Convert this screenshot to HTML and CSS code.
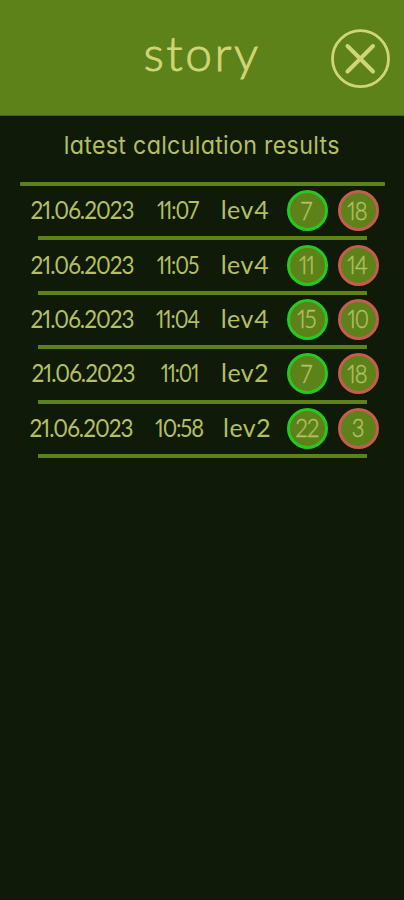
FILE: index.html
```html
<!DOCTYPE html>
<html lang="en">
<head>
<meta charset="utf-8">
<title>story</title>
<link rel="stylesheet" href="styles.css">
</head>
<body>
<main class="screen">
  <header class="bar">
    <h1 class="title"><span>story</span></h1>
    <button class="close" aria-label="Close">
      <svg viewBox="0 0 60 60"><circle cx="29.5" cy="29.7" r="28"/><path d="M16.5 17 42 42.5M42 17 16.5 42.5"/></svg>
    </button>
  </header>
  <h2 class="subtitle"><span>latest calculation results</span></h2>
  <section class="results">
    <div class="row"><span class="date">21.06.2023</span><span class="time">11:07</span><span class="level">lev4</span><span class="badge right"><b>7</b></span><span class="badge wrong"><b>18</b></span></div>
    <div class="row"><span class="date">21.06.2023</span><span class="time">11:05</span><span class="level">lev4</span><span class="badge right"><b>11</b></span><span class="badge wrong"><b>14</b></span></div>
    <div class="row"><span class="date">21.06.2023</span><span class="time">11:04</span><span class="level">lev4</span><span class="badge right"><b>15</b></span><span class="badge wrong"><b>10</b></span></div>
    <div class="row narrow"><span class="date">21.06.2023</span><span class="time">11:01</span><span class="level">lev2</span><span class="badge right"><b>7</b></span><span class="badge wrong"><b>18</b></span></div>
    <div class="row wide"><span class="date">21.06.2023</span><span class="time">10:58</span><span class="level">lev2</span><span class="badge right"><b>22</b></span><span class="badge wrong"><b>3</b></span></div>
  </section>
</main>
</body>
</html>
```
FILE: styles.css
```css
* { box-sizing: border-box; }
body { margin: 0; background: #0f1a08; }
.screen {
  height: 900px;
  overflow: hidden;
  background: #0f1a08;
  color: #b4bf62;
  font-family: Lato, sans-serif;
  border-bottom: 1px solid #1c1009;
}
.bar {
  display: grid;
  grid-template-columns: 1fr 60px;
  height: 116px;
  padding: 29px 13px 0 73px;
  background: #5d8219;
  border-bottom: 1px solid #456313;
  color: #d0d577;
}
.title {
  margin: 0;
  font-size: 48px;
  font-weight: 300;
  line-height: 48px;
  text-align: center;
  letter-spacing: 2.5px;
  -webkit-text-stroke: 0.9px;
}
.close { width: 60px; height: 60px; padding: 0; border: 0; background: none; }
.close svg { display: block; fill: none; stroke: #d0d577; stroke-width: 2.8; stroke-linecap: round; }
.close path { stroke-width: 4; }
.subtitle {
  height: 66px;
  margin: 0;
  font: 400 24.5px/59px Inter, sans-serif;
  font-feature-settings: "cv11";
  text-align: center;
  white-space: nowrap;
}
.subtitle span { display: inline-block; letter-spacing: 0.3px; transform: translateX(-0.5px) scaleX(0.95); }
.results::before {
  content: "";
  display: block;
  height: 4px;
  margin: 0 19px 0 20px;
  background: #5d8219;
  border-radius: 1px;
}
.row {
  display: grid;
  grid-template-columns: 104px 52px 50px 41px 41px;
  column-gap: 0;
  align-items: center;
  height: 54.4px;
  padding: 0 0 5px 30px;
  font-size: 25px;
  font-feature-settings: "pnum";
  background: linear-gradient(#5d8219, #5d8219) 38px 100% / 329px 4px no-repeat;
}
.row > span { white-space: nowrap; display: flex; justify-content: center; }
.date, .time, .level { padding-bottom: 3px; }
.date { letter-spacing: -1.1px; transform: scaleX(0.9); }
.time { margin-left: 18px; width: 52px; letter-spacing: -1.3px; transform: translateX(-0.5px) scaleX(0.84); }
.level { margin-left: 34px; width: 50px; letter-spacing: 0.5px; }
.row .badge {
  width: 41px;
  height: 41px;
  margin-left: 51px;
  align-items: center;
  border: 3px solid;
  border-radius: 50%;
  background: #5d8219;
}
.badge b {
  color: #b4bf62;
  font-weight: 300;
  letter-spacing: -1px;
  transform: translate(-1px, -1px) scaleX(0.88);
  -webkit-text-stroke: 0.5px;
}
.row .right { border-color: #27c91d; }
.row .wrong { border-color: #c65b50; margin-left: 61px; }
.narrow .date { transform: translateX(1px) scaleX(0.9); }
.narrow .time { transform: translateX(1.5px) scaleX(0.82); }
.wide .date { transform: translateX(-1px) scaleX(0.9); }
.wide .time { transform: translateX(1px) scaleX(0.88); }
.wide .level { transform: translateX(2px); }
```
